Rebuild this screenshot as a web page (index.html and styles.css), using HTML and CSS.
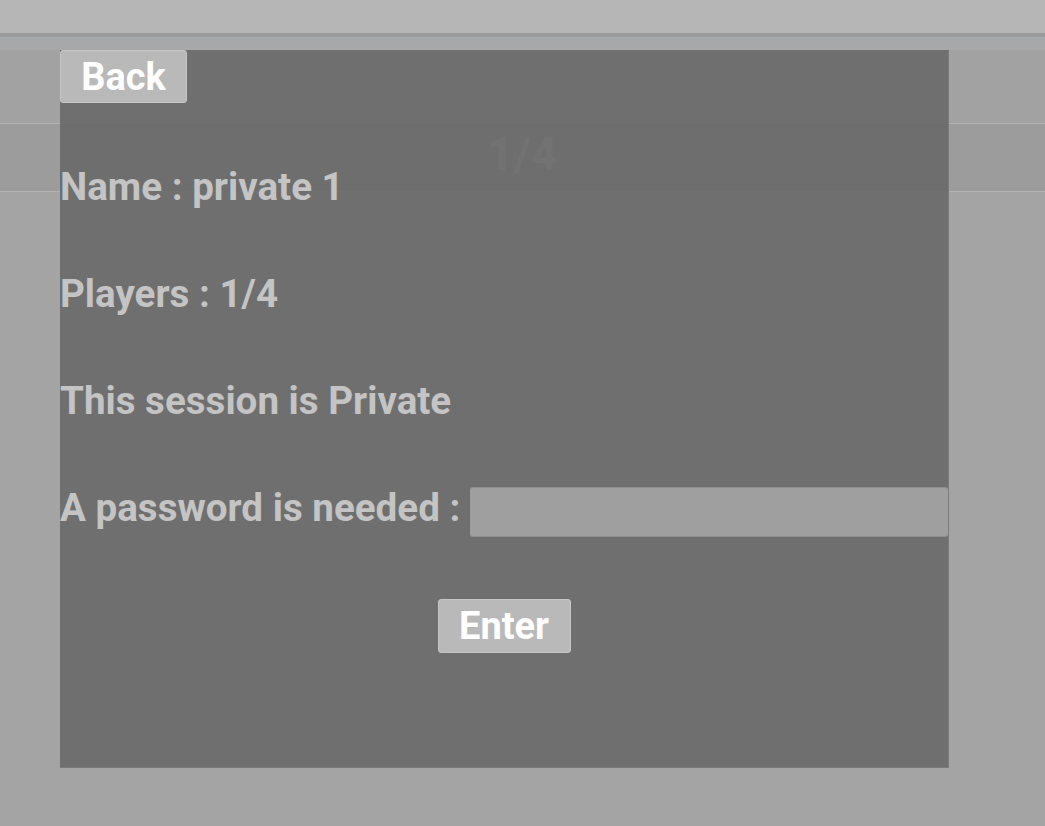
FILE: index.html
```html
<!DOCTYPE html>
<html lang="en">
<head>
<meta charset="utf-8">
<title>Session</title>
<link rel="stylesheet" href="styles.css">
</head>
<body>
<div class="page">
  <header class="topbar"></header>
  <div class="strip"></div>
  <div class="table">
    <div class="row head"><div class="cell"></div></div>
    <div class="row data"><div class="cell">1/4</div></div>
  </div>

  <div class="modal">
    <button class="btn back" type="button">Back</button>
    <p class="line name">Name : private 1</p>
    <p class="line">Players : 1/4</p>
    <p class="line">This session is Private</p>
    <div class="pwrow">
      <label class="line" for="pw">A password is needed :</label>
      <input id="pw" class="pw" type="password">
    </div>
    <div class="actions">
      <button class="btn enter" type="button">Enter</button>
    </div>
  </div>
</div>
</body>
</html>
```

FILE: styles.css
```css
* { box-sizing: border-box; }

html, body {
  margin: 0;
  padding: 0;
}

body {
  background: #a4a4a4;
  font-family: Roboto, "Liberation Sans", sans-serif;
  width: 1045px;
  height: 826px;
  overflow: hidden;
}

.page {
  position: relative;
  width: 1045px;
  height: 826px;
}

.topbar {
  height: 37px;
  background: #b6b6b6;
  border-bottom: 4px solid #9b9b9b;
}

.strip {
  height: 13px;
  background: #a7a8a9;
}

.table {
  display: flex;
  flex-direction: column;
}

.row {
  display: flex;
  align-items: center;
  justify-content: center;
  border-bottom: 1px solid #b3b3b3;
}

.row.head {
  height: 74px;
  background: #a2a2a2;
}

.row.data {
  height: 68px;
  background: #9c9c9c;
}

.cell {
  font-size: 46px;
  font-weight: 700;
  color: #c4c4c4;
  line-height: 1;
  margin-top: -8px;
}

.modal {
  position: absolute;
  left: 60px;
  top: 50px;
  width: 889px;
  height: 718px;
  background: rgba(106, 106, 106, 0.92);
  border-right: 1px solid #7a7a7a;
  border-bottom: 1px solid #7a7a7a;
  display: flex;
  flex-direction: column;
  align-items: flex-start;
}

.btn {
  font-family: Roboto, "Liberation Sans", sans-serif;
  font-weight: 700;
  font-size: 38px;
  color: #ffffff;
  background: #b9b9b9;
  border: 1px solid #c6c6c6;
  border-radius: 3px;
  padding: 0;
  line-height: 50px;
  text-align: center;
}

.back {
  width: 127px;
  height: 53px;
}

.line {
  margin: 0;
  font-size: 38.6px;
  font-weight: 700;
  color: #c4c4c4;
  line-height: 46px;
  white-space: nowrap;
}

.name { margin-top: 61px; }

.line + .line { margin-top: 61px; }

.pwrow {
  margin-top: 61px;
  display: flex;
  align-items: flex-start;
  gap: 10px;
  width: 100%;
}

.pw {
  flex: 1;
  height: 50px;
  margin-top: 2px;
  background: #9f9f9f;
  border: 1px solid #8f8f8f;
  border-left-color: #9f9f9f;
  border-right-color: #9f9f9f;
  border-radius: 3px;
  outline: none;
}

.actions {
  width: 100%;
  display: flex;
  justify-content: center;
  margin-top: 62px;
}

.enter {
  width: 133px;
  height: 54px;
}
```
